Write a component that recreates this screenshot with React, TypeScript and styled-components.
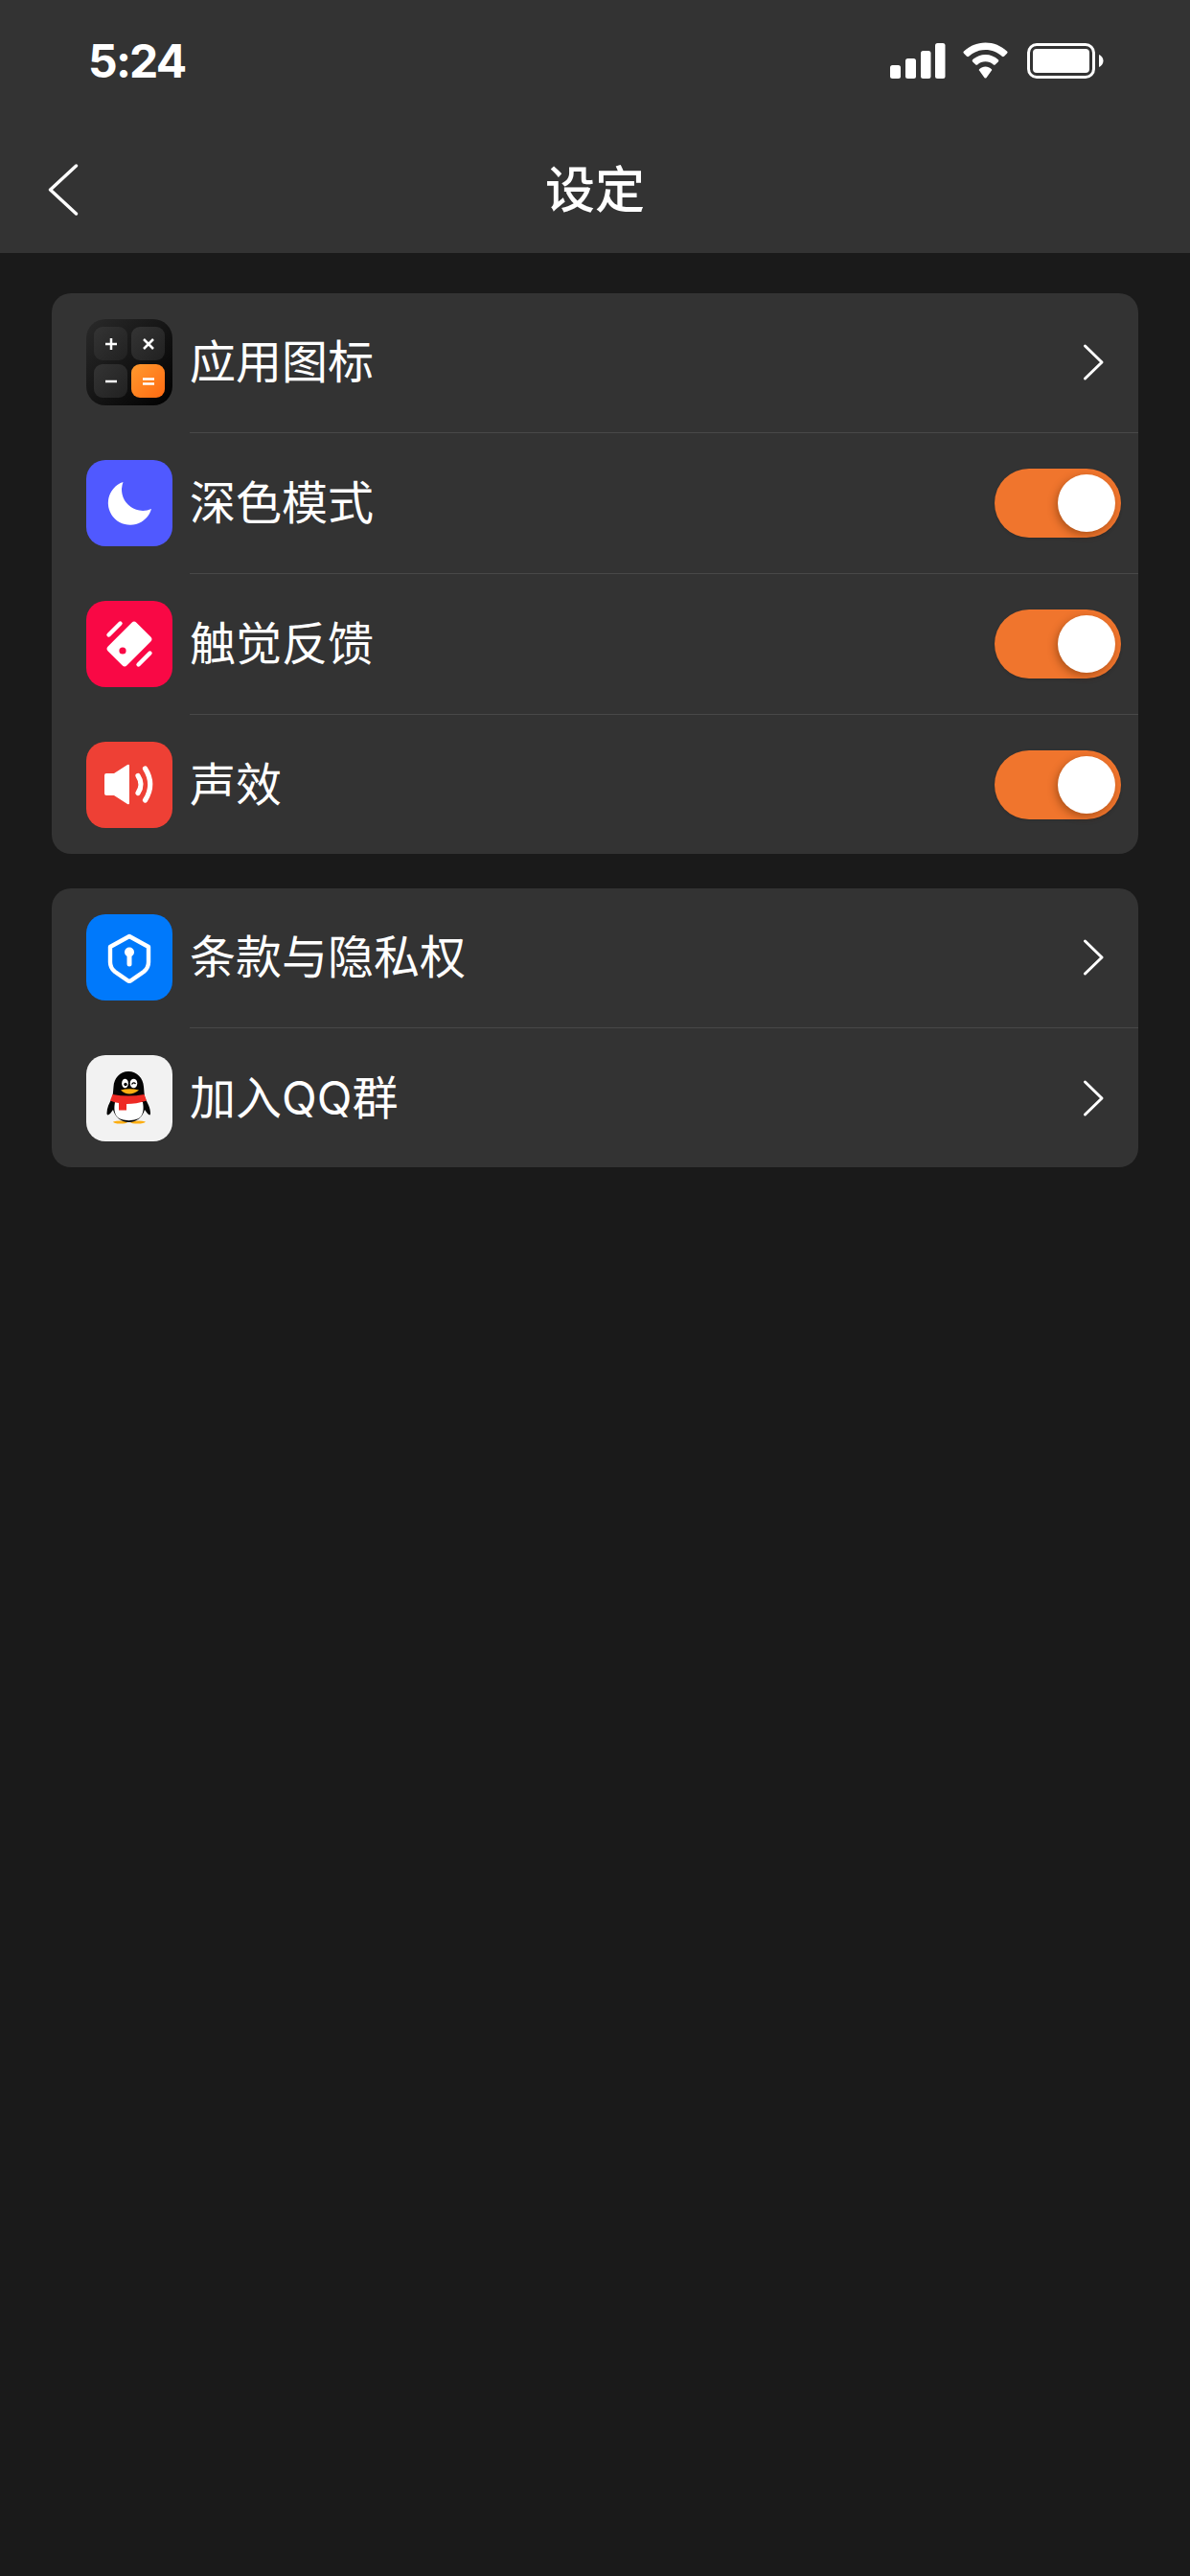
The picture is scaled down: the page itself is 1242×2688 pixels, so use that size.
import React from "react";
import styled, { createGlobalStyle } from "styled-components";

const Global = createGlobalStyle`
  html, body { margin: 0; padding: 0; background: #1a1a1a; }
  * { box-sizing: border-box; }
`;

const Page = styled.div`
  width: 1242px;
  height: 2688px;
  background: #1a1a1a;
  overflow: hidden;
  font-family: Inter, "Noto Sans CJK SC", "Noto Sans", sans-serif;
  color: #fff;
`;

const Header = styled.header`
  height: 264px;
  background: #333333;
  display: flex;
  flex-direction: column;
`;

const StatusBar = styled.div`
  height: 127px;
  padding: 44px 90px 0 92px;
  display: flex;
  justify-content: space-between;
  align-items: flex-start;
`;

const Time = styled.span`
  font-family: Inter, "Liberation Sans", sans-serif;
  font-size: 48px;
  line-height: 40px;
  font-weight: 700;
  letter-spacing: -1.8px;
`;

const StatusIcons = styled.svg`
  display: block;
  width: 223px;
  height: 40px;
`;

const NavBar = styled.nav`
  flex: 1;
  display: grid;
  grid-template-columns: 1fr auto 1fr;
  align-items: center;
  padding-top: 5px;
`;

const Title = styled.h1`
  margin: 2px 0 0;
  font-size: 52px;
  line-height: 72px;
  font-weight: 500;
`;

const BackIcon = styled.svg`
  display: block;
  width: 32px;
  height: 54px;
  margin-left: 50px;
`;

const Content = styled.main`
  padding: 42px 54px 0;
  display: flex;
  flex-direction: column;
  gap: 36px;
`;

const Card = styled.section`
  background: #333333;
  border-radius: 20px;
  overflow: hidden;
`;

const Row = styled.div`
  display: flex;
  align-items: center;
  padding: 28px 0 28px 36px;
  &:first-child { padding-top: 27px; }
  &:last-child { padding-bottom: 27px; }
`;

const Divider = styled.div`
  height: 1px;
  margin-left: 144px;
  background: #484848;
`;

const IconBox = styled.div<{ $bg: string }>`
  width: 90px;
  height: 90px;
  flex: none;
  border-radius: 20px;
  background: ${(p) => p.$bg};
  overflow: hidden;
`;

const IconSvg = styled.svg`
  display: block;
  width: 90px;
  height: 90px;
`;

const Label = styled.span`
  flex: 1;
  margin-left: 18px;
  font-size: 48px;
  line-height: 64px;
  font-weight: 400;
`;

const Chevron = styled.svg`
  display: block;
  width: 24px;
  height: 40px;
  margin-right: 35px;
`;

const Toggle = styled.div`
  width: 132px;
  height: 72px;
  margin-right: 18px;
  padding: 6px;
  border-radius: 36px;
  background: #f0752d;
  display: flex;
  justify-content: flex-end;
  box-shadow: 0 1px 3px rgba(0, 0, 0, 0.15);
`;

const Knob = styled.div`
  width: 60px;
  height: 60px;
  border-radius: 50%;
  background: #fff;
  box-shadow: -2px 3px 8px rgba(90, 40, 0, 0.45);
`;

const CalcGrid = styled.div`
  width: 90px;
  height: 90px;
  padding: 8px;
  display: grid;
  grid-template-columns: 35px 35px;
  grid-template-rows: 35px 35px;
  gap: 4px;
  background: linear-gradient(135deg, #2a2a2a, #000);
`;

const CalcKey = styled.div<{ $accent?: boolean }>`
  border-radius: 9px;
  background: ${(p) =>
    p.$accent
      ? "linear-gradient(135deg, #ff9a2e, #ff6a12)"
      : "linear-gradient(135deg, #343434, #212121)"};
  display: flex;
  align-items: center;
  justify-content: center;
`;

const KeyGlyph = styled.svg`
  display: block;
  width: 16px;
  height: 16px;
`;

const Chev = () => (
  <Chevron viewBox="0 0 24 40">
    <path d="M3.5 3 L21 20 L3.5 37" fill="none" stroke="#fff" strokeWidth="3" strokeLinecap="round" strokeLinejoin="round" />
  </Chevron>
);

const Switch = () => (
  <Toggle>
    <Knob />
  </Toggle>
);

const g = { stroke: "#fff", strokeWidth: 2.5, strokeLinecap: "butt" as const, fill: "none" };

const CalcIcon = () => (
  <IconBox $bg="#000">
    <CalcGrid>
      <CalcKey>
        <KeyGlyph viewBox="0 0 16 16"><path d="M8 2v12M2 8h12" {...g} /></KeyGlyph>
      </CalcKey>
      <CalcKey>
        <KeyGlyph viewBox="0 0 16 16"><path d="M3 3l10 10M13 3L3 13" {...g} /></KeyGlyph>
      </CalcKey>
      <CalcKey>
        <KeyGlyph viewBox="0 0 16 16"><path d="M2 8h12" {...g} /></KeyGlyph>
      </CalcKey>
      <CalcKey $accent>
        <KeyGlyph viewBox="0 0 16 16"><path d="M2 5.5h12M2 10.5h12" {...g} /></KeyGlyph>
      </CalcKey>
    </CalcGrid>
  </IconBox>
);

const MoonIcon = () => (
  <IconBox $bg="#5059ff">
    <IconSvg viewBox="0 0 90 90">
      <path d="M38.5 23 A23 23 0 1 0 68 51 A22 22 0 0 1 38.5 23 Z" fill="#fff" />
    </IconSvg>
  </IconBox>
);

const HapticIcon = () => (
  <IconBox $bg="#f90845">
    <IconSvg viewBox="0 0 90 90">
      <rect x="24" y="31" width="42" height="28" rx="3.5" fill="#fff" transform="rotate(-45 45 45)" />
      <circle cx="38" cy="52" r="3.6" fill="#f90845" />
      <path d="M23.5 35.5 L35.5 23.5 M54.5 66.5 L66.5 54.5" stroke="#fff" strokeWidth="4.4" strokeLinecap="round" fill="none" />
    </IconSvg>
  </IconBox>
);

const SoundIcon = () => (
  <IconBox $bg="#ee4035">
    <IconSvg viewBox="0 0 90 90">
      <path d="M21 33 H29 L43 24 Q45 23 45 25 V64 Q45 66 43 65 L29 56 H21 Q19 56 19 54 V35 Q19 33 21 33 Z" fill="#fff" />
      <path d="M54 35.5 Q60 44.5 54 53.5 M61.5 28 Q72 44.5 61.5 61" stroke="#fff" strokeWidth="5.2" strokeLinecap="round" fill="none" />
    </IconSvg>
  </IconBox>
);

const ShieldIcon = () => (
  <IconBox $bg="#0079fb">
    <IconSvg viewBox="0 0 90 90">
      <path d="M45 23 L65 34 V50 Q65 56 60 60 L47 69 Q45 70.5 43 69 L30 60 Q25 56 25 50 V34 Z" fill="none" stroke="#fff" strokeWidth="4.4" strokeLinejoin="round" />
      <circle cx="45" cy="39.5" r="5" fill="#fff" />
      <path d="M45 40 V52" stroke="#fff" strokeWidth="5" strokeLinecap="round" />
    </IconSvg>
  </IconBox>
);

const QQIcon = () => (
  <IconBox $bg="#f2f2f2">
    <IconSvg viewBox="0 0 90 90">
      <path d="M28 69.5 Q36 67.5 43 70 Q42 71.5 35 71.5 Q29 71.5 28 69.5 Z M46 70 Q54 67.5 62 69.5 Q60 71.5 54 71.5 Q47 71.5 46 70 Z" fill="#fcae12" />
      <path d="M44 17 C35 17 29 24 28.5 33 C28 38 28 41 27 45 C24 50 21.5 55 21.5 60.5 C21.5 63 23 63 25 61 L28 57 C30 64 36 70 44.5 70 C53 70 59 64 61 57 L64 61 C66 63 67 63 67 60.5 C67 55 64 50 61.5 45 C60.5 41 60.5 38 60 33 C59.5 24 53 17 44 17 Z" fill="#050505" />
      <path d="M30 49 H59 C60 55 60 60 57 64 C53 69.5 36 69.5 32 64 C29 60 29 55 30 49 Z" fill="#fff" />
      <path d="M27.5 41 Q44 44 60.5 41 L63 47.5 Q52 51 42 51 L42 57.5 L34 57.5 L34 50 Q30 49.5 25 47.5 Z" fill="#ee2a24" />
      <ellipse cx="40.5" cy="29.5" rx="3.4" ry="4.8" fill="#fff" />
      <ellipse cx="49.5" cy="29.5" rx="3.8" ry="4.8" fill="#fff" />
      <circle cx="41" cy="30.5" r="1.7" fill="#000" />
      <path d="M47.5 30.5 Q49.5 27.5 51.5 30" stroke="#000" strokeWidth="1.3" fill="none" />
      <path d="M36 36.5 Q45 34 55 36.5 Q50 40.5 45 40.5 Q40 40.5 36 36.5 Z" fill="#fcae12" />
    </IconSvg>
  </IconBox>
);

export default function App() {
  return (
    <Page>
      <Global />
      <Header>
        <StatusBar>
          <Time>5:24</Time>
          <StatusIcons viewBox="0 0 223 40">
            <g fill="#fff">
              <rect x="0" y="24" width="11" height="14" rx="2.5" />
              <rect x="16" y="17" width="11" height="21" rx="2.5" />
              <rect x="32" y="9" width="10.5" height="29" rx="2.5" />
              <rect x="47" y="1" width="10.5" height="37" rx="2.5" />
              <path d="M99.5 0.5 C108 0.5 116 3.8 122 9.5 C122.8 10.2 122.8 11 122 11.8 L119 14.8 C118.3 15.4 117.5 15.4 116.8 14.8 C112.2 10.6 106.1 8 99.5 8 C92.9 8 86.8 10.6 82.2 14.8 C81.5 15.4 80.7 15.4 80 14.8 L77 11.8 C76.2 11 76.2 10.2 77 9.5 C83 3.8 91 0.5 99.5 0.5 Z" />
              <path d="M99.5 13 C104.6 13 109.3 15 112.8 18.3 C113.5 19 113.5 19.7 112.8 20.4 L109.9 23.3 C109.2 24 108.5 24 107.8 23.4 C105.5 21.4 102.7 20.2 99.5 20.2 C96.3 20.2 93.5 21.4 91.2 23.4 C90.5 24 89.8 24 89.1 23.3 L86.2 20.4 C85.5 19.7 85.5 19 86.2 18.3 C89.7 15 94.4 13 99.5 13 Z" />
              <path d="M99.5 25.5 C101.9 25.5 104 26.4 105.7 27.9 C106.4 28.5 106.4 29.2 105.8 29.8 L100.6 36.9 C100 37.6 99 37.6 98.4 36.9 L93.2 29.8 C92.6 29.2 92.6 28.5 93.3 27.9 C95 26.4 97.1 25.5 99.5 25.5 Z" />
              <rect x="149" y="7" width="59" height="25" rx="4" />
              <path d="M218 13 C220.5 14 222.5 16.5 222.5 19.5 C222.5 22.5 220.5 25 218 26 Z" />
            </g>
            <rect x="144.5" y="2.5" width="68" height="34" rx="8.5" fill="none" stroke="#fff" strokeWidth="3" />
          </StatusIcons>
        </StatusBar>
        <NavBar>
          <BackIcon viewBox="0 0 32 54">
            <path d="M29.5 2 L2.5 27 L29.5 52" fill="none" stroke="#fff" strokeWidth="3.4" strokeLinecap="round" strokeLinejoin="round" />
          </BackIcon>
          <Title>设定</Title>
          <span />
        </NavBar>
      </Header>
      <Content>
        <Card>
          <Row><CalcIcon /><Label>应用图标</Label><Chev /></Row>
          <Divider />
          <Row><MoonIcon /><Label>深色模式</Label><Switch /></Row>
          <Divider />
          <Row><HapticIcon /><Label>触觉反馈</Label><Switch /></Row>
          <Divider />
          <Row><SoundIcon /><Label>声效</Label><Switch /></Row>
        </Card>
        <Card>
          <Row><ShieldIcon /><Label>条款与隐私权</Label><Chev /></Row>
          <Divider />
          <Row><QQIcon /><Label>加入QQ群</Label><Chev /></Row>
        </Card>
      </Content>
    </Page>
  );
}
